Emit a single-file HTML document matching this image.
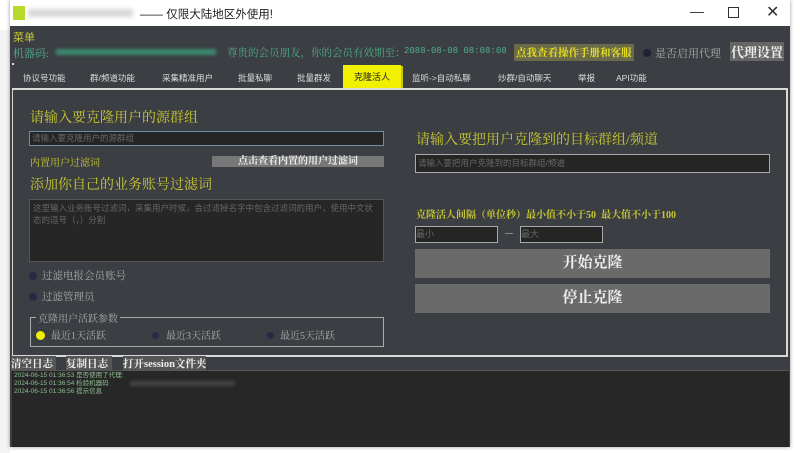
<!DOCTYPE html>
<html><head><meta charset="utf-8"><style>
*{margin:0;padding:0;box-sizing:border-box}
body{width:800px;height:453px;background:#fff;position:relative;overflow:hidden;font-family:"Liberation Sans","Noto Sans CJK SC",sans-serif}
.a{position:absolute;white-space:nowrap}
.serif{font-family:"Liberation Serif","Noto Serif CJK SC",serif}
.y{color:#c8c832}
.g{color:#4fae8a}
</style></head><body>
<div class="a" style="left:0;top:30px;width:10px;height:423px;background:#f4f4f4"></div>
<div class="a" style="left:10px;top:0;width:780px;height:447px;background:#3b3e42;box-shadow:0 0 4px rgba(0,0,0,.4)"></div>
<div class="a" style="left:10px;top:0;width:780px;height:26px;background:#fff"></div>
<div class="a" style="left:13px;top:6px;width:12px;height:14px;background:#b6d92a"></div>
<div class="a" style="left:28px;top:9px;width:105px;height:8px;background:#d8d8d8;filter:blur(2px)"></div>
<div class="a" style="left:140px;top:6px;font-size:11.5px;color:#222">—— 仅限大陆地区外使用!</div>
<div class="a" style="left:690px;top:3px;font-size:14px;color:#333">—</div>
<div class="a" style="left:728px;top:7px;width:11px;height:11px;border:1px solid #333"></div>
<div class="a" style="left:766px;top:2px;font-size:16px;color:#333">✕</div>
<div class="a y" style="left:13px;top:29px;font-size:11px">菜单</div>
<div class="a g serif" style="left:13px;top:45px;font-size:11px">机器码:</div>
<div class="a" style="left:56px;top:49px;width:160px;height:6px;background:#3c8a70;filter:blur(1.5px)"></div>
<div class="a g serif" style="left:227px;top:45px;font-size:10.5px">尊贵的会员朋友，你的会员有效期至：</div>
<div class="a g" style="left:404px;top:46px;font-size:9px;font-family:'Liberation Mono',monospace">2088-08-08 08:08:08</div>
<div class="a serif" style="left:514px;top:44px;font-size:10.5px;background:#6b6b4a;color:#e8e020;padding:1px 2px;font-weight:bold">点我查看操作手册和客服</div>
<div class="a" style="left:643px;top:49px;width:8px;height:8px;border-radius:50%;background:#1f2230"></div>
<div class="a serif" style="left:655px;top:45px;font-size:11px;color:#aaa">是否启用代理</div>
<div class="a serif" style="left:730px;top:42px;font-size:13px;background:#666;color:#eee;font-weight:bold;padding:0 1px">代理设置</div>
<div class="a" style="left:12px;top:63px;width:2px;height:2px;background:#ddd"></div>
<div class="a" style="left:12px;top:66px;height:22px;font-size:8.5px;color:#ddd">
<span class="a" style="left:11px;top:6px">协议号功能</span>
<span class="a" style="left:78px;top:6px">群/频道功能</span>
<span class="a" style="left:150px;top:6px">采集精准用户</span>
<span class="a" style="left:226px;top:6px">批量私聊</span>
<span class="a" style="left:285px;top:6px">批量群发</span>
</div>
<div class="a" style="left:343px;top:65px;width:58px;height:24px;background:#f0f000;color:#222;font-size:9px;text-align:center;line-height:24px">克隆活人</div>
<div class="a" style="left:401px;top:66px;width:2px;height:22px;background:#c8c800"></div>
<div class="a" style="left:400px;top:66px;font-size:8.5px;color:#ddd">
<span class="a" style="left:12px;top:6px">监听->自动私聊</span>
<span class="a" style="left:98px;top:6px">炒群/自动聊天</span>
<span class="a" style="left:178px;top:6px">举报</span>
<span class="a" style="left:216px;top:6px">API功能</span>
</div>
<div class="a" style="left:12px;top:88px;width:776px;height:269px;border:2px solid #d8d8d8;border-left-width:1px"></div>
<div class="a y serif" style="left:30px;top:107px;font-size:14px">请输入要克隆用户的源群组</div>
<div class="a" style="left:29px;top:131px;width:355px;height:15px;background:#252525;border:1px solid #6a8fa8;font-size:8.5px;color:#666;padding-left:2px;line-height:13px">请输入要克隆用户的源群组</div>
<div class="a y serif" style="left:30px;top:154px;font-size:10px">内置用户过滤词</div>
<div class="a serif" style="left:212px;top:156px;width:172px;height:11px;background:#777;color:#eee;font-size:10px;font-weight:bold;text-align:center;line-height:11px">点击查看内置的用户过滤词</div>
<div class="a y serif" style="left:30px;top:174px;font-size:14px">添加你自己的业务账号过滤词</div>
<div class="a" style="left:29px;top:199px;width:355px;height:63px;background:#262626;border:1px solid #555;font-size:8.5px;color:#666;padding:2px 3px;line-height:12px;white-space:normal">这里输入业务账号过滤词，采集用户时候，会过滤掉名字中包含过滤词的用户，使用中文状态的逗号（，）分割</div>
<div class="a" style="left:29px;top:272px;width:8px;height:8px;border-radius:50%;background:#282a45"></div>
<div class="a serif" style="left:42px;top:268px;font-size:10.5px;color:#aaa">过滤电报会员账号</div>
<div class="a" style="left:29px;top:293px;width:8px;height:8px;border-radius:50%;background:#282a45"></div>
<div class="a serif" style="left:42px;top:289px;font-size:10.5px;color:#aaa">过滤管理员</div>
<div class="a" style="left:30px;top:317px;width:354px;height:30px;border:1px solid #aaa"></div>
<div class="a serif" style="left:36px;top:310px;font-size:10px;color:#aaa;background:#3b3e42;padding:0 2px">克隆用户活跃参数</div>
<div class="a" style="left:36px;top:331px;width:9px;height:9px;border-radius:50%;background:#f0f000"></div>
<div class="a serif" style="left:51px;top:327px;font-size:10px;color:#aaa">最近1天活跃</div>
<div class="a" style="left:152px;top:332px;width:7px;height:7px;border-radius:50%;background:#282a45"></div>
<div class="a serif" style="left:166px;top:327px;font-size:10px;color:#aaa">最近3天活跃</div>
<div class="a" style="left:267px;top:332px;width:7px;height:7px;border-radius:50%;background:#282a45"></div>
<div class="a serif" style="left:280px;top:327px;font-size:10px;color:#aaa">最近5天活跃</div>
<div class="a y serif" style="left:416px;top:129px;font-size:14px">请输入要把用户克隆到的目标群组/频道</div>
<div class="a" style="left:415px;top:154px;width:355px;height:19px;background:#252525;border:1px solid #aaa;font-size:8.5px;color:#666;padding-left:2px;line-height:17px">请输入要把用户克隆到的目标群组/频道</div>
<div class="a y serif" style="left:416px;top:206px;font-size:10px;font-weight:bold">克隆活人间隔（单位秒）最小值不小于50&nbsp; 最大值不小于100</div>
<div class="a" style="left:415px;top:226px;width:83px;height:17px;background:#252525;border:1px solid #aaa;font-size:9px;color:#666;line-height:15px">最小</div>
<div class="a" style="left:505px;top:233px;width:8px;height:1px;background:#888"></div>
<div class="a" style="left:520px;top:226px;width:83px;height:17px;background:#252525;border:1px solid #aaa;font-size:9px;color:#666;line-height:15px">最大</div>
<div class="a serif" style="left:415px;top:249px;width:355px;height:29px;background:#6a6a6a;color:#eee;font-size:15px;font-weight:bold;text-align:center;line-height:29px">开始克隆</div>
<div class="a serif" style="left:415px;top:284px;width:355px;height:29px;background:#6a6a6a;color:#eee;font-size:15px;font-weight:bold;text-align:center;line-height:29px">停止克隆</div>
<div class="a serif" style="left:11px;top:356px;font-size:10.5px;color:#eee;font-weight:bold;background:#555;width:45px">清空日志</div>
<div class="a serif" style="left:66px;top:356px;font-size:10.5px;color:#eee;font-weight:bold;background:#555;width:46px">复制日志</div>
<div class="a serif" style="left:123px;top:356px;font-size:10.5px;color:#eee;font-weight:bold;background:#555">打开session文件夹</div>
<div class="a" style="left:12px;top:370px;width:777px;height:77px;background:#272727;border-top:1px solid #555"></div>
<div class="a" style="left:14px;top:372px;font-size:6.5px;color:#8fbf8f;line-height:8px">2024-06-15 01:36:53 是否使用了代理:<br>2024-06-15 01:36:54 检验机器码<br>2024-06-15 01:36:56 提示信息</div>
<div class="a" style="left:130px;top:381px;width:105px;height:5px;background:#444;filter:blur(1.5px)"></div>
</body></html>
